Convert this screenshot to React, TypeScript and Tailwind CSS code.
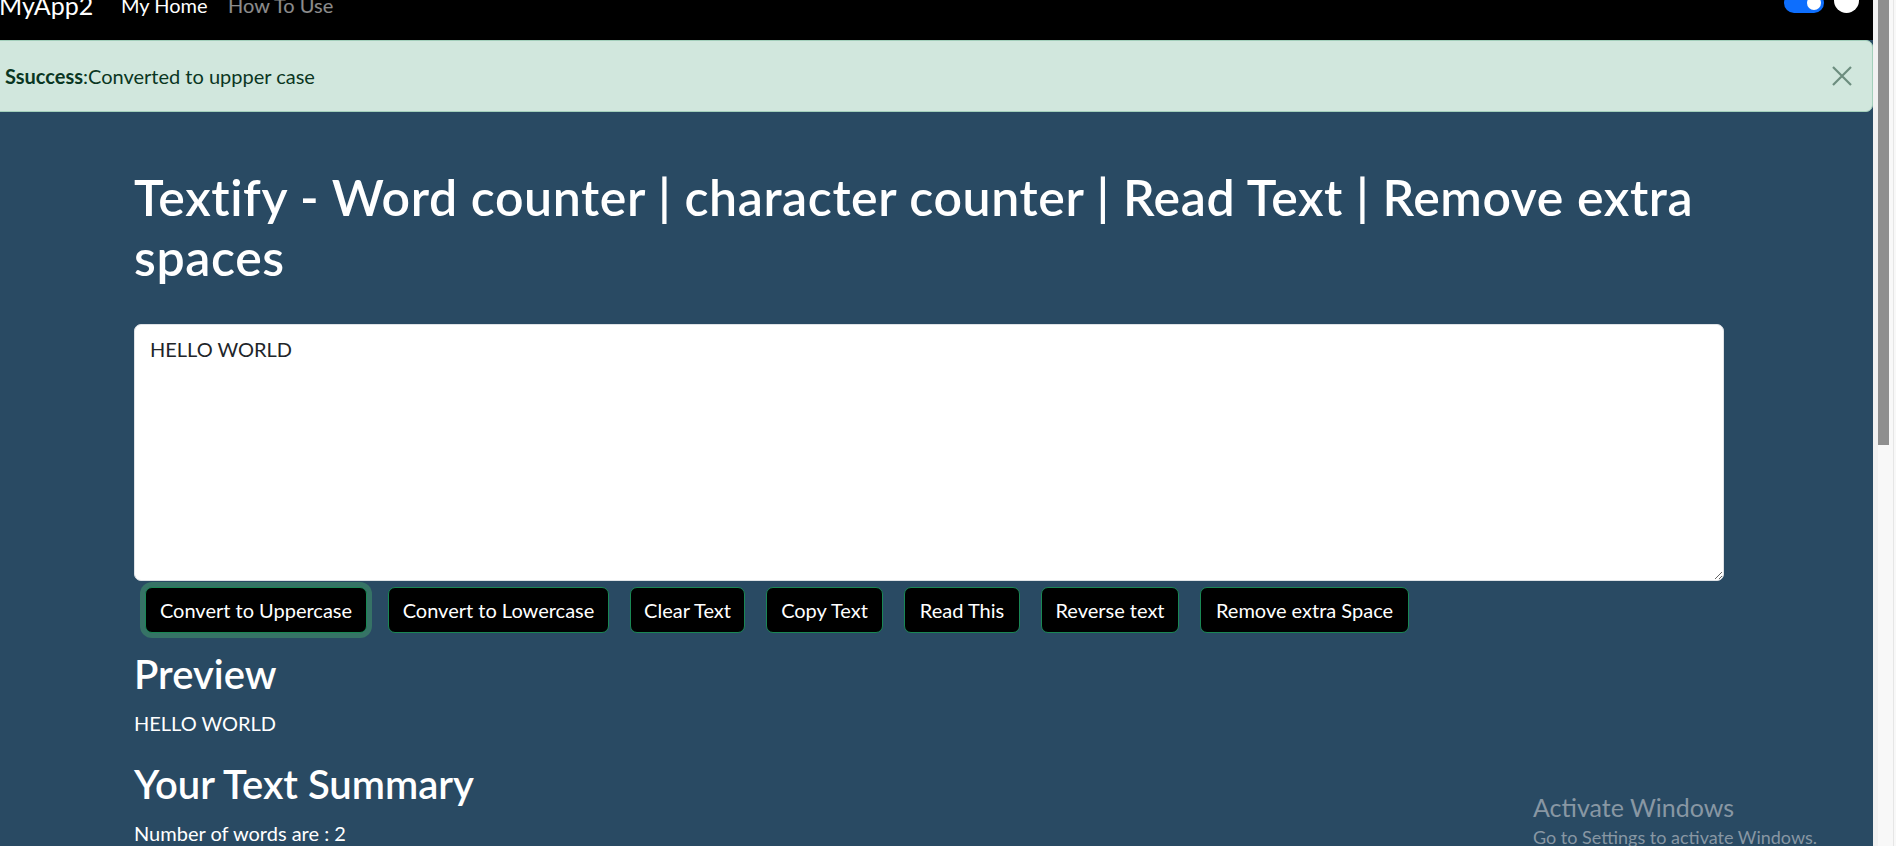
import React, { useState } from 'react';

const buttons = [
    { label: 'Convert to Uppercase', w: 'w-[222px]', focused: true },
    { label: 'Convert to Lowercase', w: 'w-[221px]' },
    { label: 'Clear Text', w: 'w-[115px]' },
    { label: 'Copy Text', w: 'w-[117px]' },
    { label: 'Read This', w: 'w-[116px]' },
    { label: 'Reverse text', w: 'w-[138px]' },
    { label: 'Remove extra Space', w: 'w-[209px]' },
];

export default function App() {
    const [text, setText] = useState('HELLO WORLD');
    const words = text.split(/\s+/).filter((w) => w.length > 0).length;

    return (
        <div className="h-[846px] w-full overflow-hidden flex bg-[#294a63] font-['Lato',sans-serif] text-white">
            <div className="flex-1 min-w-0 flex flex-col relative">
                {/* navbar (page is scrolled, only the bottom part shows) */}
                <nav className="h-[40px] bg-black overflow-hidden shrink-0">
                    <div className="h-[70px] -mt-[30px] flex items-center">
                        <span className="w-[122px] shrink-0 text-[25px] leading-[30px] -ml-[1px]">MyApp2</span>
                        <span className="w-[107px] shrink-0 text-[20px] leading-[24px]">My Home</span>
                        <span className="text-[20px] leading-[24px] text-white/55">How To Use</span>
                        <div className="ml-auto mr-[14px] flex items-center gap-[10px]">
                            <div className="w-[40px] h-[20px] rounded-full bg-[#0d6efd] flex items-center justify-end pr-[3px] mt-[-4px]">
                                <div className="w-[14px] h-[14px] rounded-full bg-white" />
                            </div>
                            <div className="w-[25px] h-[25px] rounded-full bg-white -mt-[10px]" />
                        </div>
                    </div>
                </nav>

                {/* alert */}
                <div className="-ml-[16px] h-[72px] shrink-0 border border-[#a3cfbb] bg-[#d1e7dd] rounded-[7px] flex items-center pl-[20px] pr-[20px] text-[#0a3622] text-[20px] leading-[30px]">
                    <span>
                        <strong className="font-bold">Ssuccess</strong>:Converted to uppper case
                    </span>
                    <button className="ml-auto w-[20px] h-[20px] opacity-50">
                        <svg viewBox="0 0 20 20" width="20" height="20" fill="none" stroke="#0a3622" strokeWidth="2.2">
                            <path d="M1 1 L19 19 M19 1 L1 19" />
                        </svg>
                    </button>
                </div>

                <main className="pl-[134px] pt-[55px] w-[1724px]">
                    <h1 className="text-[50px] leading-[60px] font-semibold tracking-[0.6px] mb-[10px]">
                        Textify - Word counter | character counter | Read Text | Remove extra spaces
                    </h1>
                    <textarea
                        value={text}
                        onChange={(e) => setText(e.target.value)}
                        className="mt-[37px] block w-[1590px] h-[257px] bg-white text-[#212529] border border-[#dee2e6] rounded-[7px] px-[15px] pt-[9px] pb-[6px] text-[20px] leading-[30px] outline-none font-['Lato',sans-serif]"
                    />
                    <div className="flex gap-[21px] ml-[11px] mt-[6px]">
                        {buttons.map((b) => (
                            <button
                                key={b.label}
                                className={`${b.w} h-[46px] bg-black border border-[#198754] rounded-[7px] text-[20px] leading-[30px] text-white ${b.focused ? 'ring-[5px] ring-[#367366]' : ''}`}
                            >
                                {b.label}
                            </button>
                        ))}
                    </div>

                    <h2 className="mt-[17px] text-[40px] leading-[48px] font-semibold mb-[10px]">Preview</h2>
                    <p className="text-[20px] leading-[30px] mb-[22px]">{text}</p>
                    <h2 className="text-[40px] leading-[48px] font-semibold mb-[10px]">Your Text Summary</h2>
                    <p className="text-[20px] leading-[30px]">Number of words are : {words}</p>
                </main>

                {/* windows watermark */}
                <div className="absolute left-[1533px] top-[792px] text-[#8897a3] pointer-events-none">
                    <div className="text-[25px] leading-[30px]">Activate Windows</div>
                    <div className="text-[18px] leading-[22px] mt-[4px] whitespace-nowrap">Go to Settings to activate Windows.</div>
                </div>
            </div>

            {/* scrollbar */}
            <div className="w-[23px] shrink-0 bg-[#f8f8f8] flex">
                <div className="w-[5px] bg-[#f1f1f1]" />
                <div className="w-[11px] h-[445px] bg-[#8f8f8f]" />
                <div className="w-[4px]" />
                <div className="w-[1px] bg-[#e6e6e6]" />
            </div>
        </div>
    );
}
